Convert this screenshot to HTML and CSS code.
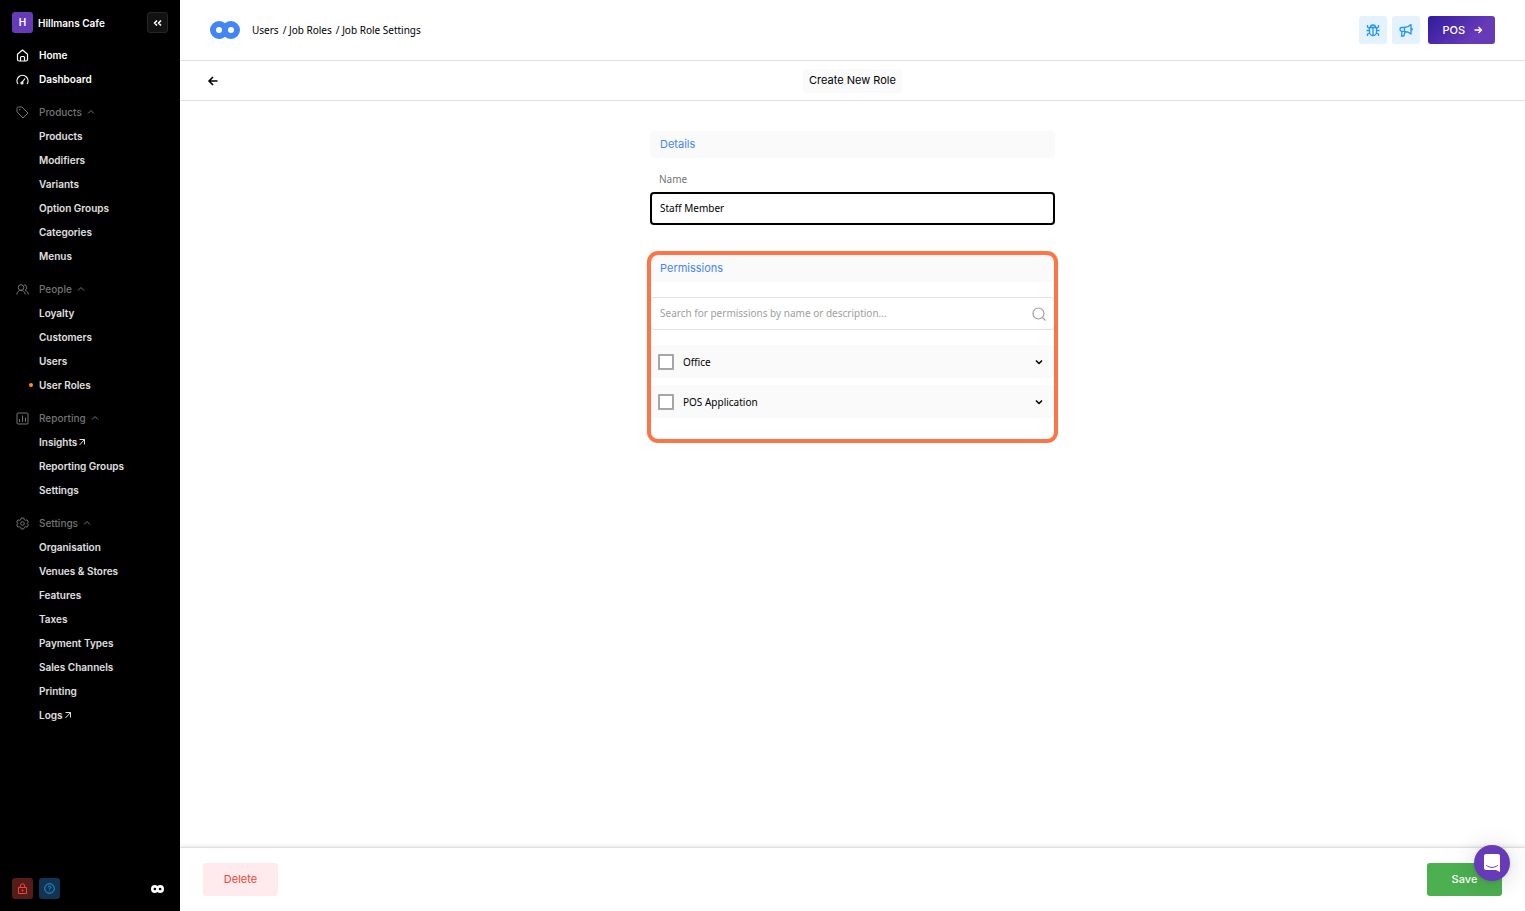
FILE: index.html
```
<!DOCTYPE html>
<html lang="en">
<head>
<meta charset="utf-8">
<title>Job Role Settings</title>
<link rel="stylesheet" href="styles.css">
</head>
<body>
<!-- shared icons -->
<svg class="sprite" aria-hidden="true">
    <symbol id="up" viewBox="0 0 8 8"><path d="M1 5.500 4 2.500 7 5.500"/></symbol>
    <symbol id="out" viewBox="0 0 8 8"><path d="M1.500 1.500h5v5M6.500 1.500 1.500 7"/></symbol>
    <symbol id="down" viewBox="0 0 8 8"><path d="M1 2.500 4 5.500 7 2.500"/></symbol>
    <symbol id="loops" viewBox="0 0 30 18"><path fill-rule="evenodd" d="M9 0a9 9 0 0 1 6 2.300A9 9 0 0 1 21 0a9 9 0 0 1 0 18 9 9 0 0 1-6-2.300A9 9 0 0 1 9 18 9 9 0 0 1 9 0zM9 6a3 3 0 1 0 0 6 3 3 0 0 0 0-6zM21 6a3 3 0 1 0 0 6 3 3 0 0 0 0-6z"/></symbol>
</svg>

<div class="app">
<aside class="sidebar">
    <div class="venue">
        <span class="venue-badge">H</span>
        <span class="venue-name">Hillmans Cafe</span>
        <button class="collapse" aria-label="Collapse menu"><svg class="icon" width="10" height="10" viewBox="0 0 10 10" stroke-width="1.600"><path d="M4 2.500 1.500 5 4 7.500M8 2.500 5.500 5 8 7.500"/></svg></button>
    </div>
    <nav class="menu">
        <ul class="top">
            <li><a href="#"><svg class="icon" width="13" height="13" viewBox="0 0 13 13" stroke-width="1.200"><path d="M1.500 5.200 6.500 1l5 4.200v5.300a1.500 1.500 0 0 1-1.500 1.500H3a1.500 1.500 0 0 1-1.500-1.500zM4.500 12V8.500a1 1 0 0 1 1-1h2a1 1 0 0 1 1 1V12"/></svg>Home</a></li>
            <li><a href="#"><svg class="icon" width="13" height="13" viewBox="0 0 13 13" stroke-width="1.200"><path d="M2 11A5.500 5.500 0 1 1 11 11M6 9.500 9 5.500M5 10a1 1 0 1 0 2 0 1 1 0 0 0-2 0"/></svg>Dashboard</a></li>
        </ul>
        <button class="group"><svg class="icon" width="13" height="13" viewBox="0 0 13 13"><path d="M1 2.500Q1 1 2.500 1H6l6 6-5 5-6-6z"/><path d="M3.500 3.500h.500v.500h-.500z"/></svg>Products<svg class="icon caret"><use href="#up"/></svg></button>
        <ul>
            <li><a href="#">Products</a></li>
            <li><a href="#">Modifiers</a></li>
            <li><a href="#">Variants</a></li>
            <li><a href="#">Option Groups</a></li>
            <li><a href="#">Categories</a></li>
            <li><a href="#">Menus</a></li>
        </ul>
        <button class="group"><svg class="icon" width="13" height="13" viewBox="0 0 13 13"><circle cx="5" cy="4.500" r="2.800"/><path d="M.800 11.500c.400-2.800 2-4.200 4.200-4.200s3.800 1.400 4.200 4.200M8 1.800a2.800 2.800 0 0 1 1 5.400c1.800.500 3 1.800 3.400 4.300"/></svg>People<svg class="icon caret"><use href="#up"/></svg></button>
        <ul>
            <li><a href="#">Loyalty</a></li>
            <li><a href="#">Customers</a></li>
            <li><a href="#">Users</a></li>
            <li><a href="#" class="current">User Roles</a></li>
        </ul>
        <button class="group"><svg class="icon" width="13" height="13" viewBox="0 0 13 13"><rect x="1" y="1" width="11" height="11" rx="1"/><path d="M3.500 10V7M6.500 10V3.500M9.500 10V5.500"/></svg>Reporting<svg class="icon caret"><use href="#up"/></svg></button>
        <ul>
            <li><a href="#">Insights<svg class="icon ext"><use href="#out"/></svg></a></li>
            <li><a href="#">Reporting Groups</a></li>
            <li><a href="#">Settings</a></li>
        </ul>
        <button class="group"><svg class="icon" width="13" height="13" viewBox="0 0 13 13"><circle cx="6.500" cy="6.500" r="1.800"/><path d="M5.300 1h2.400l.5 1.600 1.300.7 1.600-.4 1.200 2.100-1.100 1.500 1.100 1.500-1.200 2.100-1.600-.4-1.300.7-.5 1.600H5.300l-.5-1.600-1.300-.7-1.600.4L.7 8l1.100-1.500L.7 5l1.200-2.100 1.600.4 1.300-.7z"/></svg>Settings<svg class="icon caret"><use href="#up"/></svg></button>
        <ul>
            <li><a href="#">Organisation</a></li>
            <li><a href="#">Venues &amp; Stores</a></li>
            <li><a href="#">Features</a></li>
            <li><a href="#">Taxes</a></li>
            <li><a href="#">Payment Types</a></li>
            <li><a href="#">Sales Channels</a></li>
            <li><a href="#">Printing</a></li>
            <li><a href="#">Logs<svg class="icon ext"><use href="#out"/></svg></a></li>
        </ul>
    </nav>
    <div class="sidebar-foot">
        <button class="square lock" aria-label="Lock"><svg class="icon" width="11" height="11" viewBox="0 0 11 11"><rect x="1.500" y="4.500" width="8" height="6"/><path d="M3.300 4.500V3a2.200 2.200 0 0 1 4.400 0v1.500M5 7h1v1H5z"/></svg></button>
        <button class="square help" aria-label="Help"><svg class="icon" width="11" height="11" viewBox="0 0 11 11"><circle cx="5.500" cy="5.500" r="4.800"/><path d="M4.200 4.300a1.300 1.300 0 1 1 1.900 1.200c-.4.200-.6.400-.6.900M5.500 7.800v.5"/></svg></button>
        <svg class="foot-logo"><use href="#loops"/></svg>
    </div>
</aside>

<div class="page">
    <header class="topbar">
        <svg class="logo"><use href="#loops"/></svg>
        <nav class="crumbs"><a href="#">Users</a><a href="#">/ Job Roles</a><a href="#">/ Job Role Settings</a></nav>
        <div class="actions">
            <button class="tool" aria-label="Report a bug"><svg class="icon" width="14" height="14" viewBox="0 0 14 14" stroke-width="1.300"><path d="M4.500 4.500a2.500 2.500 0 0 1 5 0zM3.500 4.500h7V9a3.500 3.500 0 0 1-7 0zM7 4.500v8M3.500 7.500H.500M10.500 7.500h3M3.500 5.500 1.500 4V2M10.500 5.500l2-1.500V2M3.800 10l-2.300 1V13M10.200 10l2.300 1V13"/></svg></button>
            <button class="tool" aria-label="Announcements"><svg class="icon" width="14" height="14" viewBox="0 0 14 14" stroke-width="1.300"><path d="M12 1.500v9.500C10 9 8 8.300 5.500 8.300H3a2 2 0 0 1-2-2c0-1 .8-1.800 2-1.800h2.500C8 4.500 10 3.500 12 1.500zM5.500 4.500v3.800M3 8.500 2.500 13h2.300l1.400-4.500M12 5.500h1v1.500h-1"/></svg></button>
            <button class="pos">POS<svg class="icon" width="10" height="10" viewBox="0 0 10 10" stroke-width="1.300"><path d="M1.500 5h7M5.500 2l3 3-3 3"/></svg></button>
        </div>
    </header>
    <div class="titlebar">
        <a href="#" class="back" aria-label="Back"><svg class="icon" width="10" height="10" viewBox="0 0 10 10" stroke-width="1.700"><path d="M9.500 5H1M5 1 1 5l4 4"/></svg></a>
        <h1>Create New Role</h1>
    </div>

    <main class="content">
        <form class="role-form">
            <section class="details">
                <h2>Details</h2>
                <label class="field-label" for="name">Name</label>
                <input class="name" type="text" id="name" value="Staff Member">
            </section>
            <section class="permissions">
                <h2>Permissions</h2>
                <div class="search">
                    <input type="text" aria-label="Search permissions" placeholder="Search for permissions by name or description...">
                    <svg class="icon" width="14" height="14" viewBox="0 0 14 14" stroke-width="1.200"><circle cx="6.500" cy="6.500" r="5.500"/><path d="m10.500 10.500 3 3"/></svg>
                </div>
                <div class="perm">
                    <input type="checkbox" id="office"><label for="office">Office</label>
                    <button type="button" aria-label="Expand Office"><svg class="icon caret"><use href="#down"/></svg></button>
                </div>
                <div class="perm">
                    <input type="checkbox" id="posapp"><label for="posapp">POS Application</label>
                    <button type="button" aria-label="Expand POS Application"><svg class="icon caret"><use href="#down"/></svg></button>
                </div>
            </section>
        </form>
    </main>

    <footer class="bottombar">
        <button class="delete">Delete</button>
        <button class="save">Save</button>
    </footer>
</div>
</div>

<button class="chat" aria-label="Open chat"><svg width="16" height="18" viewBox="0 0 16 18"><path fill="#fff" d="M2 0h12a2 2 0 0 1 2 2v16l-4-2H2a2 2 0 0 1-2-2V2a2 2 0 0 1 2-2z"/><path fill="none" stroke="#673ab7" stroke-linecap="round" d="M2.500 11.500c3 2.600 8 2.600 11 0"/></svg></button>

<script>
// put the cursor after the name
var nameBox = document.getElementById("name");
nameBox.focus();
nameBox.setSelectionRange(nameBox.value.length, nameBox.value.length);
</script>
</body>
</html>
```
FILE: styles.css
```
* {
    box-sizing: border-box;
}
body {
    margin: 0;
    font-family: Inter, "Liberation Sans", sans-serif;
    font-size: 11px;
    color: #000;
    background: #fff;
}
button, input {
    font: inherit;
    color: inherit;
}
button {
    border: 0;
    padding: 0;
    background: none;
    cursor: pointer;
}
a {
    color: inherit;
    text-decoration: none;
}
ul {
    list-style: none;
    margin: 0;
    padding: 0;
}
.sprite {
    display: none;
}
.icon {
    fill: none;
    stroke: currentColor;
    stroke-linejoin: round;
    flex: none;
}
.caret, .ext {
    width: 8px;
    height: 8px;
}
.app {
    display: flex;
    min-height: 100vh;
}

/* sidebar */
.sidebar {
    width: 180px;
    flex: none;
    display: flex;
    flex-direction: column;
    padding: 12px;
    background: #000;
    color: #e0e0e0;
}
.venue {
    display: flex;
    align-items: center;
    height: 21px;
    margin-bottom: 10px;
    font-size: 10px;
    font-weight: 600;
    color: #fff;
}
.venue-badge {
    width: 21px;
    line-height: 21px;
    margin-right: 5px;
    border-radius: 3px;
    text-align: center;
    background: #673ab7;
}
.collapse {
    display: flex;
    align-items: center;
    justify-content: center;
    width: 21px;
    height: 21px;
    margin-left: auto;
    border: 1px solid #262626;
    border-radius: 3px;
    background: #121212;
}
.menu {
    flex: 1;
    font-size: 10px;
    font-weight: 600;
}
.menu a, .group {
    display: flex;
    align-items: center;
    height: 24px;
}
.menu a {
    padding-left: 27px;
}
.menu .top a {
    padding-left: 4px;
    gap: 10px;
    color: #fff;
}
.group {
    margin-top: 9px;
    padding-left: 4px;
    gap: 10px;
    font-weight: 500;
    color: #757575;
}
.group .caret {
    margin-left: -5px;
}
.menu .ext {
    margin-left: 1px;
}
.menu .current {
    padding-left: 17px;
}
.current::before {
    content: "";
    width: 4px;
    height: 4px;
    margin-right: 6px;
    border-radius: 50%;
    background: #ff9800;
}
.sidebar-foot {
    display: flex;
    align-items: center;
    gap: 6px;
}
.square {
    display: flex;
    align-items: center;
    justify-content: center;
    width: 21px;
    height: 21px;
    border-radius: 3px;
}
.lock {
    color: #f44336;
    background: #541d1a;
}
.help {
    color: #2196f3;
    background: #12344f;
}
.foot-logo {
    width: 13px;
    height: 8px;
    margin-left: auto;
    margin-right: 4px;
    fill: #fff;
}

/* top bars */
.page {
    flex: 1;
    min-width: 0;
    display: flex;
    flex-direction: column;
}
.topbar {
    display: flex;
    align-items: center;
    height: 61px;
    padding: 0 30px;
    border-bottom: 1px solid #e0e0e0;
}
.logo {
    width: 30px;
    height: 18px;
    margin-right: 12px;
    fill: #4285f4;
}
.crumbs {
    display: flex;
    gap: 4px;
    font-family: "Noto Sans", sans-serif;
    font-size: 10px;
}
.actions {
    display: flex;
    margin-left: auto;
}
.tool {
    display: flex;
    align-items: center;
    justify-content: center;
    width: 28px;
    height: 28px;
    margin-right: 5px;
    border-radius: 3px;
    color: #2196f3;
    background: #e3f2fd;
}
.pos {
    display: flex;
    align-items: center;
    gap: 8px;
    height: 28px;
    margin-left: 3px;
    padding: 0 12px 0 14px;
    border-radius: 3px;
    font-weight: 500;
    color: #fff;
    background: linear-gradient(135deg, #311b9f, #673ab7 70%);
}
.titlebar {
    display: grid;
    grid-template-columns: 1fr auto 1fr;
    align-items: center;
    height: 40px;
    padding: 0 28px;
    border-bottom: 1px solid #e0e0e0;
}
.back {
    display: flex;
}
.titlebar h1 {
    margin: 0;
    padding: 0 6px 1px;
    border-radius: 3px;
    font-size: 11px;
    font-weight: 400;
    line-height: 23px;
    background: #fafafa;
}

/* form */
.content {
    flex: 1;
    padding: 30px 20px;
}
.role-form {
    max-width: 405px;
    margin: 0 auto;
    font-family: "Noto Sans", sans-serif;
    font-size: 10px;
}
.role-form h2 {
    margin: 0;
    padding: 0 10px;
    border-radius: 4px;
    font-family: Inter, sans-serif;
    font-size: 11px;
    font-weight: 400;
    line-height: 27px;
    color: #4285f4;
    background: #fafafa;
}
.field-label {
    display: block;
    margin: 13px 0 4px;
    padding-left: 9px;
    line-height: 17px;
    color: #757575;
}
.name {
    display: block;
    width: 100%;
    height: 33px;
    padding: 0 8px 1px;
    border: 2px solid #000;
    border-radius: 4px;
    outline: none;
}
.permissions {
    position: relative;
    margin-top: 30px;
    padding-bottom: 21px;
}
/* highlight frame over the permissions block */
.permissions::after {
    content: "";
    position: absolute;
    inset: -4px -3px;
    border: 4px solid #ff7444;
    border-radius: 11px;
    pointer-events: none;
}
.search {
    display: flex;
    align-items: center;
    height: 33px;
    margin: 15px 0;
    padding: 0 8px;
    border: 1px solid #e0e0e0;
    border-radius: 4px;
    color: #9e9e9e;
}
.search input {
    flex: 1;
    min-width: 0;
    padding: 0 0 1px 1px;
    border: 0;
    outline: none;
}
.search input::placeholder {
    color: #9e9e9e;
}
.perm {
    display: flex;
    align-items: center;
    height: 33px;
    padding: 0 12px 0 8px;
    border-radius: 4px;
    background: #fafafa;
}
.perm + .perm {
    margin-top: 7px;
}
.perm input {
    appearance: none;
    width: 16px;
    height: 16px;
    margin: 0 9px 0 0;
    border: 2px solid #a6a6a6;
    border-radius: 1px;
    background: #fff;
}
.perm label {
    flex: 1;
}
.perm button {
    display: flex;
}
.perm .caret {
    stroke-width: 1.5px;
}

/* bottom bar */
.bottombar {
    display: flex;
    justify-content: space-between;
    padding: 15px 23px;
    border-top: 1px solid #e0e0e0;
    box-shadow: 0 -1px 3px rgba(0, 0, 0, 0.1);
}
.bottombar button {
    width: 75px;
    height: 33px;
    padding-bottom: 1px;
    border-radius: 3px;
}
.delete {
    color: #f44336;
    background: #ffebee;
}
.save {
    font-weight: 500;
    color: #fff;
    background: #4caf50;
}
.chat {
    position: fixed;
    right: 15px;
    bottom: 30px;
    display: flex;
    align-items: center;
    justify-content: center;
    width: 36px;
    height: 36px;
    border-radius: 50%;
    background: #673ab7;
    box-shadow: 0 1px 5px rgba(0, 0, 0, 0.1), 0 2px 24px rgba(0, 0, 0, 0.16);
}
```
